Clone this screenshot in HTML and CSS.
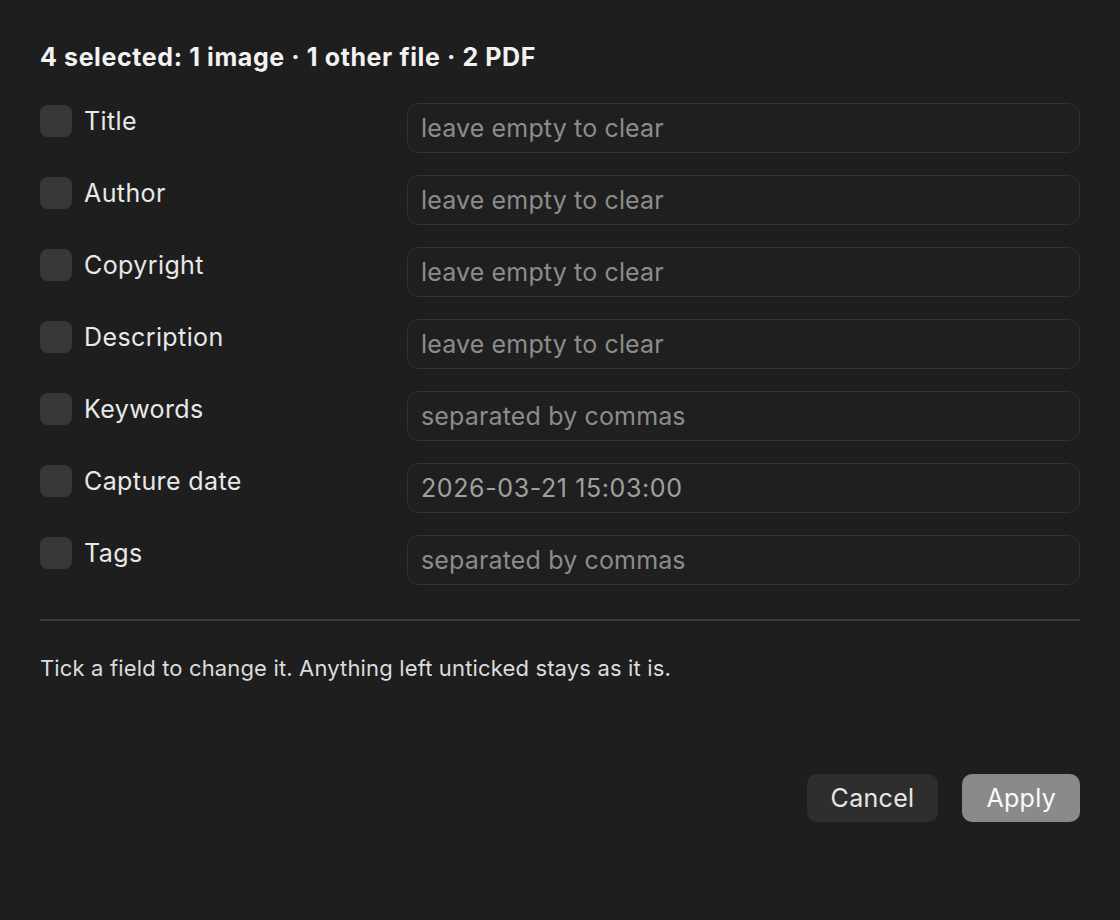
FILE: index.html
```html
<!DOCTYPE html>
<html>
<head>
    <title>Edit metadata</title>
    <link rel="stylesheet" href="styles.css">
</head>
<body>
    <div class="dialog">
        <h2>4 selected: 1 image · 1 other file · 2 PDF</h2>
        <form class="fields">
            <label class="field-label"><span class="check"></span>Title</label>
            <input type="text" placeholder="leave empty to clear">

            <label class="field-label"><span class="check"></span>Author</label>
            <input type="text" placeholder="leave empty to clear">

            <label class="field-label"><span class="check"></span>Copyright</label>
            <input type="text" placeholder="leave empty to clear">

            <label class="field-label"><span class="check"></span>Description</label>
            <input type="text" placeholder="leave empty to clear">

            <label class="field-label"><span class="check"></span>Keywords</label>
            <input type="text" placeholder="separated by commas">

            <label class="field-label"><span class="check"></span>Capture date</label>
            <input type="text" value="2026-03-21 15:03:00">

            <label class="field-label"><span class="check"></span>Tags</label>
            <input type="text" placeholder="separated by commas">
        </form>
        <hr class="divider">
        <p class="note">Tick a field to change it. Anything left unticked stays as it is.</p>
        <div class="actions">
            <button type="button" class="btn-cancel">Cancel</button>
            <button type="button" class="btn-apply">Apply</button>
        </div>
    </div>
</body>
</html>
```

FILE: styles.css
```css
body {
    margin: 0;
    padding: 0;
    background-color: #1e1e1e;
    font-family: Inter, "Noto Sans", sans-serif;
    color: #e6e6e6;
}

.dialog {
    padding: 40px 40px;
}

h2 {
    margin: 0 0 29px;
    font-size: 25px;
    font-weight: 700;
    letter-spacing: 0.6px;
    color: #f2f2f2;
    line-height: 34px;
}

.fields {
    display: grid;
    grid-template-columns: 367px 1fr;
    row-gap: 22px;
}

.field-label {
    display: flex;
    align-items: center;
    gap: 12px;
    height: 36px;
    font-size: 25px;
    letter-spacing: 0.4px;
    color: #e8e8e8;
}

.check {
    width: 32px;
    height: 32px;
    border-radius: 8px;
    background-color: #383838;
}

.fields input {
    height: 50px;
    box-sizing: border-box;
    padding: 0 13px;
    font-family: inherit;
    font-size: 25px;
    letter-spacing: 0.6px;
    color: #a0a0a0;
    background-color: #1f1f1f;
    border: 1.5px solid #333;
    border-radius: 12px;
    outline: none;
}

.fields input::placeholder {
    color: #8c8c8c;
    letter-spacing: 0.15px;
}

.divider {
    margin: 34px 0 0;
    border: none;
    border-top: 2px solid #3a3a3a;
}

.note {
    margin: 34px 0 0;
    font-size: 22px;
    letter-spacing: 0.15px;
    color: #dcdcdc;
}

.actions {
    display: flex;
    justify-content: flex-end;
    gap: 24px;
    margin-top: 93px;
}

.actions button {
    height: 48px;
    padding: 0 24px;
    font-family: inherit;
    font-size: 25px;
    letter-spacing: 0.3px;
    border: none;
    border-radius: 10px;
}

.btn-cancel {
    background-color: #2e2e2e;
    color: #e6e6e6;
}

.btn-apply {
    background-color: #8a8a8a;
    color: #fafafa;
}
```
